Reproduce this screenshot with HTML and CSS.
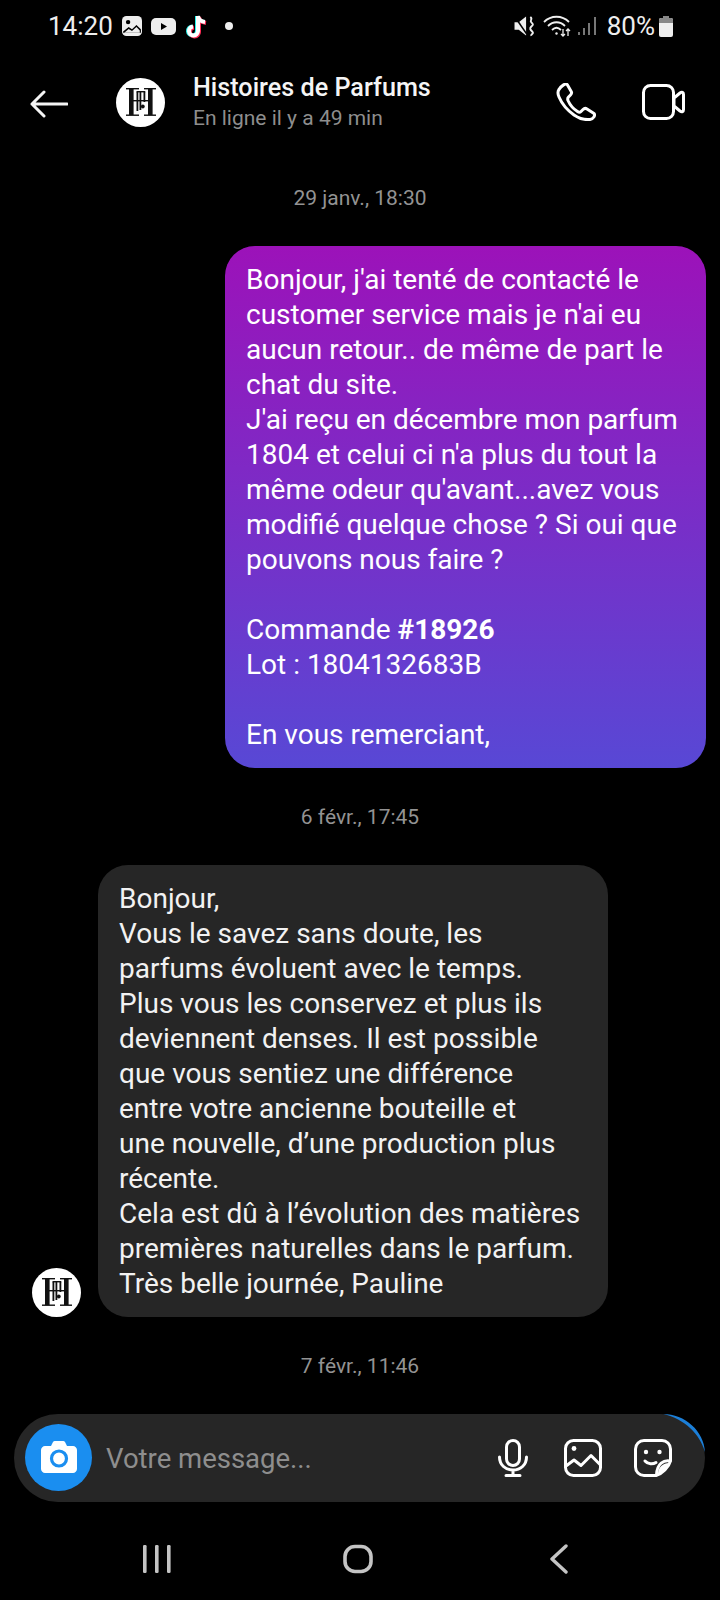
FILE: index.html
```html
<!DOCTYPE html>
<html lang="fr">
<head>
  <meta charset="UTF-8" />
  <meta name="viewport" content="width=device-width, initial-scale=1.0"/>
  <title>Histoires de Parfums</title>
  <link rel="stylesheet" href="styles.css">
</head>
<body>
  <svg class="defs" width="0" height="0">
    <symbol id="logo" viewBox="0 0 49 49">
      <circle cx="24.5" cy="24.5" r="24.5" fill="#fff"/>
      <g fill="#111">
        <rect x="10" y="10" width="13" height="1.4"/>
        <rect x="28" y="10" width="12" height="1.4"/>
        <rect x="10" y="36.500" width="13" height="1.4"/>
        <rect x="28" y="36.500" width="12" height="1.4"/>
        <rect x="13" y="10" width="4.6" height="27"/>
        <rect x="32" y="10" width="4.6" height="27"/>
        <rect x="17" y="22" width="15" height="1.4"/>
        <rect x="20.500" y="14" width="1.8" height="19"/>
        <rect x="23.500" y="14" width="1.8" height="18"/>
        <rect x="27.500" y="14" width="1.8" height="10"/>
        <rect x="20.500" y="13" width="8.800" height="1.4"/>
        <circle cx="26.800" cy="28.500" r="1.900"/>
      </g>
    </symbol>
  </svg>

  <div class="status">
    <div class="status-left">
      <span class="clock">14:20</span>
      <svg width="20" height="20" viewBox="1 1 18 18"><rect x="1" y="1" width="18" height="18" rx="4" fill="#eee"/><path d="M2 15l5-4 3 2 4-4 4 4v3H2z" fill="#000"/><path d="M3 16l4-3.400 3 2 4-3.600 3 3v2z" fill="#eee"/><circle cx="6.500" cy="6.500" r="2" fill="#000"/></svg>
      <svg width="25" height="17" viewBox="0 0 25 17"><rect width="25" height="17" rx="5" fill="#eee"/><path d="M10 5l6 3.500-6 3.500z" fill="#000"/></svg>
      <svg class="tiktok" width="23" height="25" viewBox="0 0 23 25">
        <g fill="none" stroke-width="4">
          <path d="M13 2v15a4.500 4.500 0 1 1-5-4.500M13 2c.5 3.500 3 5.500 7 6" stroke="#25f4ee" transform="translate(-1 0)"/>
          <path d="M13 2v15a4.500 4.500 0 1 1-5-4.500M13 2c.5 3.500 3 5.500 7 6" stroke="#fe2c55" transform="translate(1 1)"/>
          <path d="M13 2v15a4.500 4.500 0 1 1-5-4.500M13 2c.5 3.500 3 5.500 7 6" stroke="#fff"/>
        </g>
      </svg>
      <span class="dot"></span>
    </div>
    <div class="status-right">
      <svg width="21" height="21" viewBox="1 1 19 20"><path d="M1 7h4l7-5.500v18L5 14H1z" fill="#eee"/><path d="M1.500 2l11 16" stroke="#000" stroke-width="1.500"/><path d="M16 2c3 2-1 3 1 5s2 2 0 4-1 3 1 5-2 2-1 4" fill="none" stroke="#eee" stroke-width="1.800"/></svg>
      <svg width="29" height="22" viewBox="0 0 29 22" fill="none" stroke="#eee" stroke-width="1.800"><path d="M1 7c7-7 18-7 25 0"/><path d="M5 11c5-5 12-5 17 0"/><path d="M9 15c3-3 6-3 9 0"/><circle cx="13.500" cy="18.500" r="1.200" fill="#eee" stroke="none"/><path d="M20 14v7M18 19l2 2 2-2M25 21v-7M23 16l2-2 2 2" stroke-width="1.300"/></svg>
      <svg class="signal" width="19" height="20" viewBox="0 0 19 20"><g fill="#777"><rect x="0" y="16" width="2" height="3"/><rect x="5" y="12" width="2" height="7"/><rect x="10" y="7" width="2" height="12"/><rect x="16" y="1" width="2" height="18"/></g></svg>
      <span class="battery-label">80%</span>
      <svg width="14" height="21" viewBox="0 0 14 21"><path d="M4 0h6v2h2a2 2 0 0 1 2 2v15a2 2 0 0 1-2 2H2a2 2 0 0 1-2-2V4a2 2 0 0 1 2-2h2z" fill="#eee"/><path d="M4 0h6v2h2a2 2 0 0 1 2 2v3H0V4a2 2 0 0 1 2-2h2z" fill="#888"/></svg>
    </div>
  </div>

  <div class="header">
    <svg class="back" width="38" height="28" viewBox="0 0 38 28" fill="none" stroke="#f5f5f5" stroke-width="3" stroke-linecap="round" stroke-linejoin="round"><path d="M37 14H2M14 2L2 14l12 12"/></svg>
    <svg class="avatar" viewBox="0 0 49 49"><use href="#logo"/></svg>
    <div class="titles">
      <div class="name">Histoires de Parfums</div>
      <div class="seen">En ligne il y a 49 min</div>
    </div>
    <svg class="call" width="40" height="38" viewBox="0 0 40 38" fill="none" stroke="#fff" stroke-width="3" stroke-linejoin="round"><path d="M3 6.500c-1.500 2-1.500 4 0 7.500 3 7 8 13 15 18 5 3.500 11 5 16 4.500 3.500-.5 5.500-4 4-6l-7-4.500c-1.500-1-3-.5-4 .5l-2 2c-1 1-2 1-3.500 0-4-2.500-7.500-6.500-9.500-11-.5-1.500-.5-2.500.5-3.500l2-2c1-1 1.300-2.500.7-3.500l-4-7C9.500 0 5 3 3 6.500z"/></svg>
    <svg class="video" width="43" height="36" viewBox="0 0 43 36" fill="none" stroke="#fff" stroke-width="3" stroke-linejoin="round"><rect x="1.500" y="1.500" width="30" height="33" rx="7"/><path d="M32 14l6-5c2-1.500 3.500-.5 3.500 1.500v15c0 2-1.500 3-3.500 1.500l-6-5z"/></svg>
  </div>

  <div class="chat">
    <div class="stamp">29 janv., 18:30</div>
    <div class="bubble sent">Bonjour, j'ai tenté de contacté le<br>customer service mais je n'ai eu<br>aucun retour.. de même de part le<br>chat du site.<br>J'ai reçu en décembre mon parfum<br>1804 et celui ci n'a plus du tout la<br>même odeur qu'avant...avez vous<br>modifié quelque chose ? Si oui que<br>pouvons nous faire ?<br><br>Commande <b>#18926</b><br>Lot : 1804132683B<br><br>En vous remerciant,</div>
    <div class="stamp">6 févr., 17:45</div>
    <div class="row-in">
      <svg class="avatar" viewBox="0 0 49 49"><use href="#logo"/></svg>
      <div class="bubble received">Bonjour,<br>Vous le savez sans doute, les<br>parfums évoluent avec le temps.<br>Plus vous les conservez et plus ils<br>deviennent denses. Il est possible<br>que vous sentiez une différence<br>entre votre ancienne bouteille et<br>une nouvelle, d’une production plus<br>récente.<br>Cela est dû à l’évolution des matières<br>premières naturelles dans le parfum.<br>Très belle journée, Pauline</div>
    </div>
    <div class="stamp">7 févr., 11:46</div>
  </div>

  <div class="composer">
    <svg class="arc" width="46" height="44" viewBox="0 0 46 44"><path d="M3 0c22 0 41 17 42 38-5-18-20-33-42-38z" fill="#1c7fd8"/></svg>
    <div class="cam">
      <svg width="36" height="32" viewBox="0 0 36 32"><path d="M4 5h6l2-4c.4-.7 1-1 1.800-1h8.400c.8 0 1.400.3 1.800 1l2 4h6c2 0 4 2 4 4v19c0 2-2 4-4 4H4c-2 0-4-2-4-4V9c0-2 2-4 4-4z" fill="#fff"/><circle cx="18" cy="17.500" r="7.500" fill="none" stroke="#1a8ef0" stroke-width="3.200"/></svg>
    </div>
    <span class="placeholder">Votre message...</span>
    <div class="tools">
      <svg width="30" height="38" viewBox="0 0 30 38" fill="none" stroke="#fff" stroke-width="3" stroke-linecap="round"><rect x="8.500" y="1.500" width="13" height="25" rx="6.500"/><path d="M1.500 18c0 8 6 13 13.500 13s13.500-5 13.500-13M15 31v5M8 36.500h14"/></svg>
      <svg width="38" height="38" viewBox="0 0 38 38" fill="none" stroke="#fff" stroke-width="3" stroke-linejoin="round"><rect x="1.500" y="1.500" width="35" height="35" rx="8"/><circle cx="10" cy="9.500" r="2.400" fill="#fff" stroke="none"/><path d="M2 27l8-6 7 5.500 10-10 9 9"/></svg>
      <svg width="38" height="38" viewBox="0 0 38 38" fill="none" stroke="#fff" stroke-width="3" stroke-linecap="round" stroke-linejoin="round"><path d="M36.500 22V10a8.500 8.500 0 0 0-8.500-8.500H10A8.500 8.500 0 0 0 1.500 10v18a8.500 8.500 0 0 0 8.500 8.500h12c6-1.500 13-8.500 14.500-14.500z"/><circle cx="12" cy="13" r="2.200" fill="#fff" stroke="none"/><circle cx="25.500" cy="13" r="2.200" fill="#fff" stroke="none"/><path d="M11 22c3 3.500 8 3.500 11 1.500"/><path d="M36 22c-6-1-13 2-13.500 14" /><path d="M24 35c5-1 10-6 11-11-6 0-11 4-11 11z" fill="#fff" stroke="none"/></svg>
    </div>
  </div>

  <div class="nav">
    <svg width="28" height="30" viewBox="0 0 28 30" fill="#c4c4c4"><rect x="0" y="1" width="3.600" height="28" rx="1.200"/><rect x="12" y="1" width="3.600" height="28" rx="1.200"/><rect x="24" y="1" width="3.600" height="28" rx="1.200"/></svg>
    <svg width="30" height="30" viewBox="0 0 30 30" fill="none" stroke="#c4c4c4" stroke-width="3.600"><rect x="2" y="2.500" width="26" height="25" rx="10"/></svg>
    <svg width="18" height="30" viewBox="0 0 18 30" fill="none" stroke="#c4c4c4" stroke-width="3.400" stroke-linecap="round" stroke-linejoin="round"><path d="M16 2L2 15l14 13"/></svg>
  </div>
</body>
</html>
```

FILE: styles.css
```css
* {
  box-sizing: border-box;
}

html, body {
  margin: 0;
  height: 100%;
}

body {
  width: 720px;
  height: 1600px;
  background: #000;
  color: #fff;
  font-family: Roboto, "Liberation Sans", sans-serif;
  display: flex;
  flex-direction: column;
  overflow: hidden;
}

.defs {
  position: absolute;
}

/* Barre d'etat */
.status {
  height: 52px;
  padding: 0 47px 0 48px;
  display: flex;
  justify-content: space-between;
  align-items: center;
  color: #eee;
}

.status-left, .status-right {
  display: flex;
  align-items: center;
}

.status-left {
  gap: 9px;
}

.clock, .battery-label {
  font-size: 26px;
}

.dot {
  width: 8px;
  height: 8px;
  border-radius: 50%;
  background: #eee;
  margin-left: 8px;
}

.status-right svg:nth-child(2) {
  margin-left: 8px;
}

.signal {
  margin-left: 6px;
}

.battery-label {
  margin-left: 10px;
  margin-right: 4px;
}

/* En-tete */
.header {
  height: 100px;
  display: flex;
  align-items: center;
  padding-left: 30px;
}

.back {
  margin-right: 48px;
  margin-top: 3px;
}

.avatar {
  width: 49px;
  height: 49px;
  flex-shrink: 0;
}

.titles {
  margin-left: 28px;
  flex: 1;
}

.name {
  font-size: 25.2px;
  font-weight: 500;
  line-height: 32px;
  color: #f5f5f5;
}

.seen {
  font-size: 21px;
  line-height: 28px;
  color: #8e8e8e;
}

.call {
  margin-right: 46px;
}

.video {
  margin-right: 35px;
}

/* Messages */
.chat {
  display: flex;
  flex-direction: column;
  padding-top: 33px;
}

.stamp {
  font-size: 21px;
  line-height: 26px;
  text-align: center;
  color: #939393;
}

.bubble {
  font-size: 28px;
  line-height: 35px;
  padding: 16px 21px;
  border-radius: 30px;
}

.sent {
  align-self: flex-end;
  width: 481px;
  margin: 35px 14px 36px 0;
  background: linear-gradient(180deg, #9c12b9 0%, #5848d5 100%);
}

.row-in {
  display: flex;
  align-items: flex-end;
  gap: 17px;
  padding-left: 32px;
  margin: 35px 0 36px;
}

.received {
  width: 510px;
  background: #262626;
  color: #f2f2f2;
}

/* Zone de saisie */
.composer {
  position: relative;
  height: 88px;
  margin: 35px 15px 0 14px;
  padding: 0 33px 0 11px;
  background: #262626;
  border-radius: 44px;
  display: flex;
  align-items: center;
}

.arc {
  position: absolute;
  top: 0;
  right: -1px;
}

.cam {
  width: 67px;
  height: 67px;
  margin-bottom: 2px;
  border-radius: 50%;
  background: #1a8ef0;
  display: flex;
  align-items: center;
  justify-content: center;
  flex-shrink: 0;
}

.placeholder {
  margin-left: 14px;
  font-size: 27.5px;
  color: #8e8e8e;
  flex: 1;
}

.tools {
  display: flex;
  align-items: center;
  gap: 32px;
}

.tools svg:first-child {
  margin-right: 4px;
}

/* Navigation */
.nav {
  flex: 1;
  display: flex;
  align-items: center;
  padding: 16px 0 0 143px;
  gap: 172px;
}

.nav svg:last-child {
  margin-left: 5px;
}
```
